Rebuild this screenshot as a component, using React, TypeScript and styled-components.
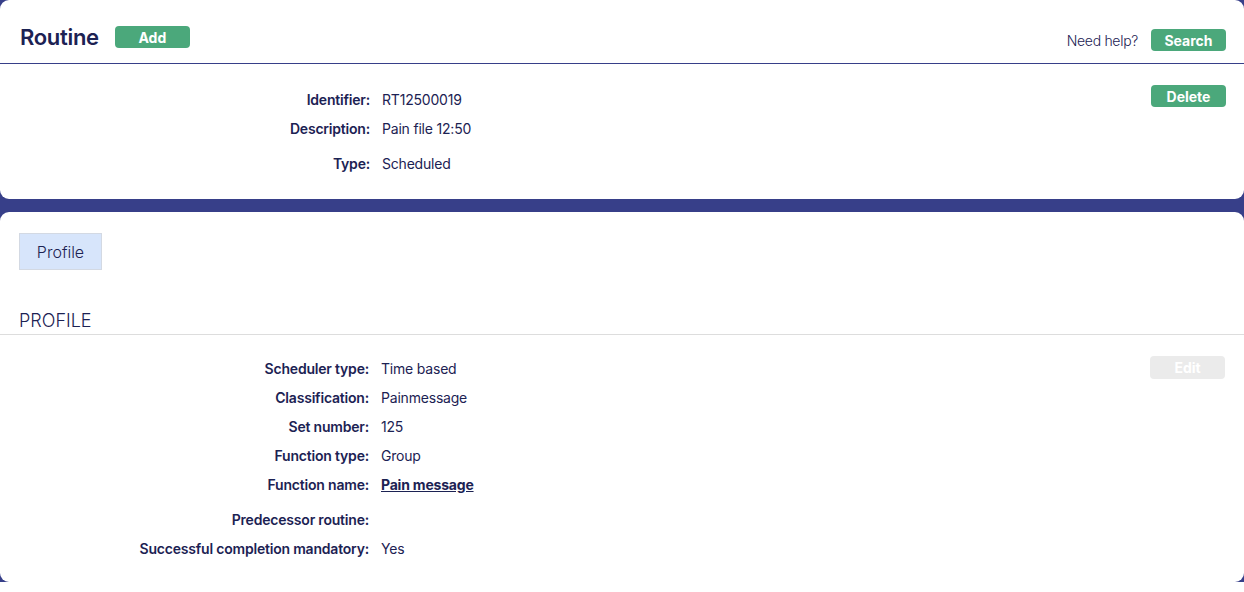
import styled, { createGlobalStyle } from "styled-components";

const GlobalStyle = createGlobalStyle`
  body {
    margin: 0;
    background: #ffffff;
    font-family: Inter, "Noto Sans", sans-serif;
    color: #1c2253;
  }
`;

const detailRows = [
  { label: "Identifier:", value: "RT12500019" },
  { label: "Description:", value: "Pain file 12:50" },
  { label: "Type:", value: "Scheduled", spaced: true },
];

const profileRows = [
  { label: "Scheduler type:", value: "Time based" },
  { label: "Classification:", value: "Painmessage" },
  { label: "Set number:", value: "125" },
  { label: "Function type:", value: "Group" },
  { label: "Function name:", value: "Pain message", link: true },
  { label: "Predecessor routine:", value: "", spaced: true },
  { label: "Successful completion mandatory:", value: "Yes" },
];

export default function App() {
  return (
    <>
      <GlobalStyle />
      <Page>
        <Card>
          <Header>
            <TitleGroup>
              <Title>Routine</Title>
              <GreenButton>Add</GreenButton>
            </TitleGroup>
            <HelpGroup>
              <HelpText>Need help?</HelpText>
              <GreenButton>Search</GreenButton>
            </HelpGroup>
          </Header>
          <DetailBody>
            <Fields $labelWidth={370}>
              {detailRows.map((row) => (
                <Row key={row.label} $spaced={row.spaced}>
                  <Label>{row.label}</Label>
                  <Value>{row.value}</Value>
                </Row>
              ))}
            </Fields>
            <GreenButton>Delete</GreenButton>
          </DetailBody>
        </Card>
        <Card>
          <Tabs>
            <Tab>Profile</Tab>
          </Tabs>
          <SectionTitle>PROFILE</SectionTitle>
          <ProfileBody>
            <Fields $labelWidth={369}>
              {profileRows.map((row) => (
                <Row key={row.label} $spaced={row.spaced}>
                  <Label>{row.label}</Label>
                  {row.link ? <LinkValue href="#">{row.value}</LinkValue> : <Value>{row.value}</Value>}
                </Row>
              ))}
            </Fields>
            <GreenButton disabled>Edit</GreenButton>
          </ProfileBody>
        </Card>
      </Page>
    </>
  );
}

const Page = styled.div`
  background: #373f89;
  display: flex;
  flex-direction: column;
  gap: 13px;
`;

const Card = styled.section`
  background: #ffffff;
  border-radius: 9px;
  overflow: hidden;
`;

const Header = styled.header`
  height: 63px;
  border-bottom: 1px solid #373f89;
  display: flex;
  align-items: flex-start;
  justify-content: space-between;
  padding: 0 18px 0 20px;
`;

const TitleGroup = styled.div`
  display: flex;
  align-items: center;
  gap: 16px;
  margin-top: 24px;
`;

const Title = styled.h1`
  margin: 0;
  font-size: 22px;
  font-weight: 600;
  letter-spacing: -0.3px;
  color: #1c2253;
`;

const HelpGroup = styled.div`
  display: flex;
  align-items: center;
  gap: 13px;
  margin-top: 29px;
`;

const HelpText = styled.span`
  font-size: 14px;
  font-weight: 300;
  letter-spacing: -0.3px;
  color: #1c2253;
`;

const GreenButton = styled.button`
  width: 75px;
  height: 22px;
  border: none;
  border-radius: 4px;
  background: #4ba87b;
  color: #ffffff;
  font-family: Inter, "Noto Sans", sans-serif;
  font-size: 14px;
  font-weight: 700;
  padding: 0;
  cursor: pointer;

  &:disabled {
    background: #ebebeb;
    color: #ffffff;
    cursor: default;
    height: 23px;
  }
`;

const DetailBody = styled.div`
  display: flex;
  justify-content: space-between;
  align-items: flex-start;
  padding: 21px 18px 0 0;
  height: 114px;
`;

const Fields = styled.div<{ $labelWidth: number }>`
  display: grid;
  grid-template-columns: ${(p) => p.$labelWidth}px 1fr;
  column-gap: 12px;
  row-gap: 0;
  font-size: 14px;
  letter-spacing: -0.2px;
`;

const Row = styled.div<{ $spaced?: boolean }>`
  display: contents;

  & > * {
    height: 29px;
    line-height: 29px;
    margin-top: ${(p) => (p.$spaced ? "6px" : "0")};
  }
`;

const Label = styled.span`
  text-align: right;
  font-weight: 600;
  color: #1c2253;
`;

const Value = styled.span`
  color: #1c2253;
`;

const LinkValue = styled.a`
  color: #1c2253;
  font-weight: 700;
  text-decoration: underline;
`;

const Tabs = styled.div`
  padding: 21px 19px 0;
  display: flex;
`;

const Tab = styled.div`
  width: 83px;
  height: 37px;
  box-sizing: border-box;
  background: #d7e5fb;
  border: 1px solid #d3d9e3;
  display: flex;
  align-items: center;
  justify-content: center;
  font-size: 16px;
  font-weight: 300;
  color: #1c2253;
`;

const SectionTitle = styled.h2`
  margin: 40px 0 0;
  padding: 0 19px 2px;
  font-size: 18px;
  font-weight: 300;
  line-height: 22px;
  border-bottom: 1px solid #dddddd;
  color: #1c2253;
`;

const ProfileBody = styled.div`
  display: flex;
  justify-content: space-between;
  align-items: flex-start;
  padding: 19px 19px 19px 0;

  & > button {
    margin-top: 2px;
  }
`;
